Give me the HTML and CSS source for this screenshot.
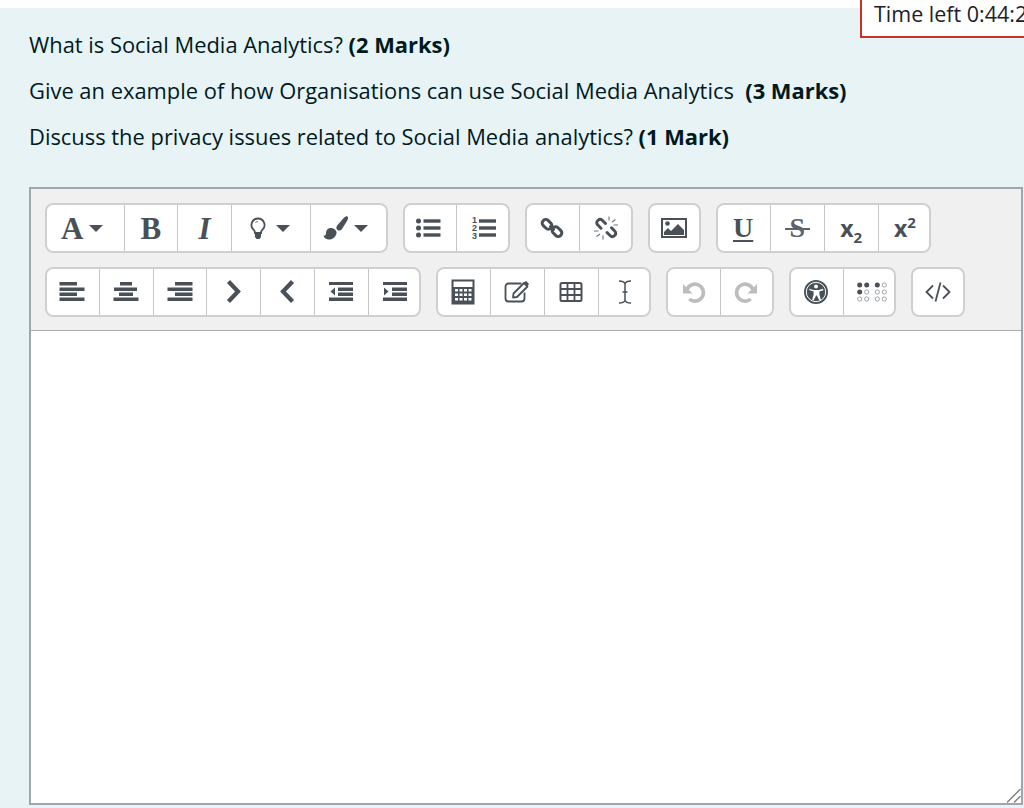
FILE: index.html
```html
<!DOCTYPE html>
<html lang="en">
<head>
<meta charset="utf-8">
<title>Question</title>
<link rel="stylesheet" href="styles.css">
</head>
<body>
<div class="timer">Time left 0:44:2</div>
<main class="content">
  <p>What is Social Media Analytics? <strong>(2 Marks)</strong></p>
  <p>Give an example of how Organisations can use Social Media Analytics &nbsp;<strong>(3 Marks)</strong></p>
  <p>Discuss the privacy issues related to Social Media analytics? <strong>(1 Mark)</strong></p>
  <section class="editor">
    <div class="toolbar">
      <div class="row">
        <div class="group">
          <button class="btn wide shift-a"><span class="glyph serif-bold">A</span><i class="caret"></i></button>
          <button class="btn"><span class="glyph serif-bold">B</span></button>
          <button class="btn"><span class="glyph serif-italic">I</span></button>
          <button class="btn wide shift-icon"><svg class="icon" viewBox="0 0 26 26"><path d="M13 3.500a6.500 6.500 0 0 0-4.500 11.200c1 1 1.500 2 1.500 3.300h6c0-1.300.5-2.300 1.500-3.300A6.500 6.500 0 0 0 13 3.500z" fill="#fff" stroke="#495057" stroke-width="1.800"/><path d="M10 17.500h6v4.500l-1.500 2h-3L10 22z" fill="#495057"/><path d="M10.500 7.500c.7-.6 1.400-.9 2.200-.9" fill="none" stroke="#495057"/></svg><i class="caret"></i></button>
          <button class="btn wide last shift-icon"><svg class="icon" viewBox="0 0 26 26"><path d="M24.500 1.500c1 1 .5 3-.5 4.500l-5 8c-1 1.500-3 2-4.500 1s-1.500-3-.3-4.500l6-7c1.200-1.500 3.300-3 4.300-2z" fill="#495057"/><path d="M7 13c3-.5 6 1.500 6.500 4 .5 3-2.500 7-6.500 7.500-3 .3-6-1-6.500-4 1.500.5 2.500-.5 2.500-2.500 0-3 2-4.500 4-5z" fill="#495057"/></svg><i class="caret"></i></button>
        </div>
        <div class="group">
          <button class="btn"><svg class="icon" viewBox="0 0 26 26"><g fill="#495057"><circle cx="2.500" cy="6" r="2.500"/><circle cx="2.500" cy="13" r="2.500"/><circle cx="2.500" cy="20" r="2.500"/><rect x="7.500" y="4.300" width="17" height="3.400"/><rect x="7.500" y="11.300" width="17" height="3.400"/><rect x="7.500" y="18.300" width="17" height="3.400"/></g></svg></button>
          <button class="btn"><svg class="icon" viewBox="0 0 26 26"><g fill="#495057"><text class="icon-digit" x="1" y="8">1</text><text class="icon-digit" x="1" y="16">2</text><text class="icon-digit" x="1" y="24">3</text><rect x="8" y="4.300" width="17" height="3.400"/><rect x="8" y="11.300" width="17" height="3.400"/><rect x="8" y="18.300" width="17" height="3.400"/></g></svg></button>
        </div>
        <div class="group">
          <button class="btn"><svg class="icon" viewBox="0 0 26 26"><g fill="none" stroke="#495057" stroke-width="3"><rect x="2.800" y="5.800" width="10.500" height="7" rx="3.200" transform="rotate(45 8 9.300)"/><rect x="12.700" y="13.200" width="10.500" height="7" rx="3.200" transform="rotate(45 18 16.700)"/></g><path d="M10.500 10.500l5 5" stroke="#495057" stroke-width="2.200"/></svg></button>
          <button class="btn"><svg class="icon" viewBox="0 0 26 26"><g fill="none" stroke="#495057" stroke-width="3" stroke-linecap="round"><path d="M12.500 8.500 9.200 5.200a2.800 2.800 0 0 0-4 0l-.6.600a2.800 2.800 0 0 0 0 4l3.400 3.400"/><path d="M14 17.500l3.300 3.300a2.800 2.800 0 0 0 4 0l.6-.6a2.800 2.800 0 0 0 0-4l-3.400-3.400"/></g><g stroke="#6c737a" stroke-width="1.100"><path d="M16 1.500v4M19 7l3.500-2.500M20.500 10h4.500M10 24.500v-4M7 19l-3.500 2.500M5.500 16H1"/></g></svg></button>
        </div>
        <div class="group">
          <button class="btn"><svg class="icon" viewBox="0 0 26 26"><rect x="1" y="4" width="24" height="18" fill="#fff" stroke="#495057" stroke-width="2"/><circle cx="6.500" cy="8.500" r="2.300" fill="#495057"/><path d="M3 20v-3l4-4 3 3 7-7 6 6v5z" fill="#495057"/></svg></button>
        </div>
        <div class="group">
          <button class="btn"><span class="glyph serif-bold underlined">U</span></button>
          <button class="btn"><span class="glyph serif-strike">S</span></button>
          <button class="btn"><span class="script">x<sub>2</sub></span></button>
          <button class="btn"><span class="script">x<sup>2</sup></span></button>
        </div>
      </div>
      <div class="row">
        <div class="group">
          <button class="btn"><svg class="icon" viewBox="0 0 26 26"><g fill="#495057"><rect x=".5" y="3" width="17.500" height="3.500"/><rect x=".5" y="8.500" width="25" height="3.500"/><rect x=".5" y="13.500" width="17.500" height="3.500"/><rect x=".5" y="18.500" width="25" height="3.500"/></g></svg></button>
          <button class="btn"><svg class="icon" viewBox="0 0 26 26"><g fill="#495057"><rect x="7" y="3" width="12" height="3.500"/><rect x="1" y="8.500" width="23" height="3.500"/><rect x="6" y="13.500" width="14" height="3.500"/><rect x=".5" y="18.500" width="25" height="3.500"/></g></svg></button>
          <button class="btn"><svg class="icon" viewBox="0 0 26 26"><g fill="#495057"><rect x="8" y="3" width="17.500" height="3.500"/><rect x=".5" y="8.500" width="25" height="3.500"/><rect x="8" y="13.500" width="17.500" height="3.500"/><rect x=".5" y="18.500" width="25" height="3.500"/></g></svg></button>
          <button class="btn"><svg class="icon" viewBox="0 0 26 26"><path d="M7.500 2.500 17 12.500l-9.500 10" fill="none" stroke="#495057" stroke-width="4.200"/></svg></button>
          <button class="btn"><svg class="icon" viewBox="0 0 26 26"><path d="M18.500 2.500 9 12.500l9.500 10" fill="none" stroke="#495057" stroke-width="4.200"/></svg></button>
          <button class="btn"><svg class="icon" viewBox="0 0 26 26"><g fill="#495057"><rect x="1" y="3" width="24" height="3"/><rect x="10" y="8.500" width="15" height="3.500"/><rect x="10" y="13.500" width="15" height="3.500"/><rect x="1" y="18.500" width="24" height="3.500"/><path d="M7 8.500v8l-4.500-4z"/></g></svg></button>
          <button class="btn"><svg class="icon" viewBox="0 0 26 26"><g fill="#495057"><rect x="1" y="3" width="24" height="3"/><rect x="10" y="8.500" width="15" height="3.500"/><rect x="10" y="13.500" width="15" height="3.500"/><rect x="1" y="18.500" width="24" height="3.500"/><path d="M2 8.500v8l4.500-4z"/></g></svg></button>
        </div>
        <div class="group">
          <button class="btn"><svg class="icon" viewBox="0 0 26 26"><rect x="2.500" y="1.500" width="21" height="23" fill="#fff" stroke="#495057" stroke-width="2"/><rect x="3" y="8" width="20" height="16" fill="#495057"/><g fill="#fff"><rect x="5" y="10" width="3" height="2.500"/><rect x="9.500" y="10" width="3" height="2.500"/><rect x="14" y="10" width="3" height="2.500"/><rect x="18.500" y="10" width="3" height="2.500"/><rect x="5" y="14.500" width="3" height="2.500"/><rect x="9.500" y="14.500" width="3" height="2.500"/><rect x="14" y="14.500" width="3" height="2.500"/><rect x="18.500" y="14.500" width="3" height="2.500"/><rect x="5" y="19" width="3" height="2.500"/><rect x="9.500" y="19" width="3" height="2.500"/><rect x="14" y="19" width="3" height="2.500"/><rect x="18.500" y="19" width="3" height="2.500"/></g></svg></button>
          <button class="btn"><svg class="icon" viewBox="0 0 26 26"><path d="M17.500 4.500H4.500a3 3 0 0 0-3 3v12a3 3 0 0 0 3 3h13a3 3 0 0 0 3-3v-6" fill="none" stroke="#495057" stroke-width="1.800"/><path d="M9.500 14.500 20 4l3.500 3.500L13 18l-4 .5z" fill="#fff" stroke="#495057" stroke-width="1.800" stroke-linejoin="round"/><path d="M21 2.800c.6-.6 1.300-.6 1.900-.1l1.500 1.500c.5.600.5 1.300-.1 1.900L23 7.500 19.500 4z" fill="#495057"/></svg></button>
          <button class="btn"><svg class="icon" viewBox="0 0 26 26"><rect x="2.500" y="4" width="21" height="18" rx="1.500" fill="none" stroke="#495057" stroke-width="2"/><path d="M2 10h22M2 16h22M9.500 4v18M16.500 4v18" stroke="#495057" stroke-width="1.800"/></svg></button>
          <button class="btn"><svg class="icon" viewBox="0 0 26 26"><path d="M7 2c3.500 0 5.200.8 6 2.500C13.800 2.800 15.500 2 19 2M13 4.500v17M7 24c3.500 0 5.200-.8 6-2.500.8 1.700 2.500 2.500 6 2.500M10.500 13h5" fill="none" stroke="#495057" stroke-width="1.500"/></svg></button>
        </div>
        <div class="group">
          <button class="btn"><svg class="icon" viewBox="0 0 26 26"><path d="M6.500 12.500a8.500 8.500 0 1 1 2.800 7.500" fill="none" stroke="#bdbdbd" stroke-width="3.600"/><path d="M3 5v9.500h9.500z" fill="#bdbdbd"/></svg></button>
          <button class="btn"><svg class="icon" viewBox="0 0 26 26"><path d="M19.500 12.500a8.500 8.500 0 1 0-2.800 7.500" fill="none" stroke="#bdbdbd" stroke-width="3.600"/><path d="M23 5v9.500h-9.500z" fill="#bdbdbd"/></svg></button>
        </div>
        <div class="group">
          <button class="btn"><svg class="icon" viewBox="0 0 26 26"><circle cx="13" cy="13" r="12" fill="#495057"/><circle cx="13" cy="13" r="9.700" fill="none" stroke="#fff" stroke-width="1"/><circle cx="13" cy="7.500" r="2" fill="#fff"/><path d="M6 9.800l4.500 1.200h5L20 9.800l.4 1.400-4 1.300v3l1.500 5.500-1.500.5-2.500-5h-.8l-2.500 5-1.500-.5 1.500-5.500v-3l-4-1.300z" fill="#fff"/></svg></button>
          <button class="btn"><svg class="icon" viewBox="0 0 26 26"><g fill="#495057"><circle cx="2.700" cy="6" r="2.500"/><circle cx="9.700" cy="6" r="2.500"/><circle cx="20.300" cy="6" r="2.500"/><circle cx="2.700" cy="13" r="2.500"/></g><g fill="none" stroke="#8a9097" stroke-width=".8"><circle cx="27.300" cy="6" r="2.100"/><circle cx="9.700" cy="13" r="2.100"/><circle cx="20.300" cy="13" r="2.100"/><circle cx="27.300" cy="13" r="2.100"/><circle cx="2.700" cy="20" r="2.100"/><circle cx="9.700" cy="20" r="2.100"/><circle cx="20.300" cy="20" r="2.100"/><circle cx="27.300" cy="20" r="2.100"/></g></svg></button>
        </div>
        <div class="group">
          <button class="btn"><svg class="icon" viewBox="0 0 26 26"><path d="M8 6.500 1.500 13 8 19.500M18 6.500l6.500 6.500-6.500 6.500M15.500 3.500 10.500 22.500" fill="none" stroke="#495057" stroke-width="1.800"/></svg></button>
        </div>
      </div>
    </div>
    <textarea class="body" aria-label="Answer"></textarea>
    <svg class="grip" viewBox="0 0 14 14"><path d="M0 13.500 13.500 0M7 13.500 13.500 7" stroke="#7d7d7d" stroke-width="1.300" fill="none"/></svg>
  </section>
</main>
</body>
</html>
```

FILE: styles.css
```css
* { box-sizing: border-box; }
html, body { margin: 0; height: 808px; overflow: hidden; background: #fff; }
body { position: relative; padding-top: 8px; font-family: "Open Sans", "Noto Sans", sans-serif; color: #001a1e; }
.timer {
  position: absolute; left: 860px; top: -4px; width: 200px; height: 42px;
  padding: 0 12px; border: 2px solid #ca3120; background: #fff;
  font-size: 21.5px; line-height: 32px; white-space: nowrap; color: #1d2125;
}
.content { height: 800px; padding: 22px 1px 0 29px; background: #e7f3f5; }
.content p { margin: 0 0 16px; font-size: 21.9px; line-height: 30px; }
.content strong { font-weight: 700; }
.editor { position: relative; margin-top: 35px; height: 618px; border: 2px solid #a0a6ae; display: flex; flex-direction: column; }
.toolbar { height: 142px; padding: 14px 0 0 14px; background: #f0f0f0; border-bottom: 1px solid #a9adb2; display: flex; flex-direction: column; gap: 14px; flex: none; }
.row { display: flex; gap: 15px; }
.group { display: flex; height: 50px; border-radius: 8px; background: #fff; outline: 2px solid #cfcfcf; outline-offset: -2px; }
.btn {
  width: 53.75px; height: 50px; padding: 0; background: transparent; border: 0;
  border-left: 1px solid #c6c6c6; display: flex; align-items: center; justify-content: center; gap: 5px;
  font: inherit; color: #495057;
}
.btn:first-child { border-left: 0; }
.btn.wide { width: 78.5px; }
.btn.wide.last { width: 78px; }
.shift-a { padding-right: 4px; gap: 6px; }
.shift-icon { padding-right: 7px; }
.icon { width: 26px; height: 26px; display: block; overflow: visible; }
.icon-digit { font: 700 9px "Liberation Sans", sans-serif; }
.caret { width: 0; height: 0; border-left: 7px solid transparent; border-right: 7px solid transparent; border-top: 7px solid #495057; }
.glyph { font-size: 31px; line-height: 1; color: #495057; }
.serif-bold { font-family: "Liberation Serif", serif; font-weight: 700; }
.serif-italic { font-family: "Liberation Serif", serif; font-style: italic; font-weight: 700; }
.serif-strike { position: relative; font-family: "Liberation Serif", serif; font-weight: 700; font-size: 28px; color: #5b636b; }
.serif-strike::after { content: ""; position: absolute; left: -5px; right: -5px; top: 14px; height: 2px; background: #5b636b; }
.underlined { font-size: 28px; text-decoration: underline; text-decoration-thickness: 2px; text-underline-offset: 3px; }
.script { font: 700 23px "Open Sans", sans-serif; color: #495057; }
.script sub, .script sup { font-size: 15px; line-height: 0; }
.body { display: block; flex: 1; width: 100%; border: 0; background: #fff; padding: 8px; outline: 0; resize: none; }
.grip { position: absolute; right: 0; bottom: 0; width: 14px; height: 14px; }
```
